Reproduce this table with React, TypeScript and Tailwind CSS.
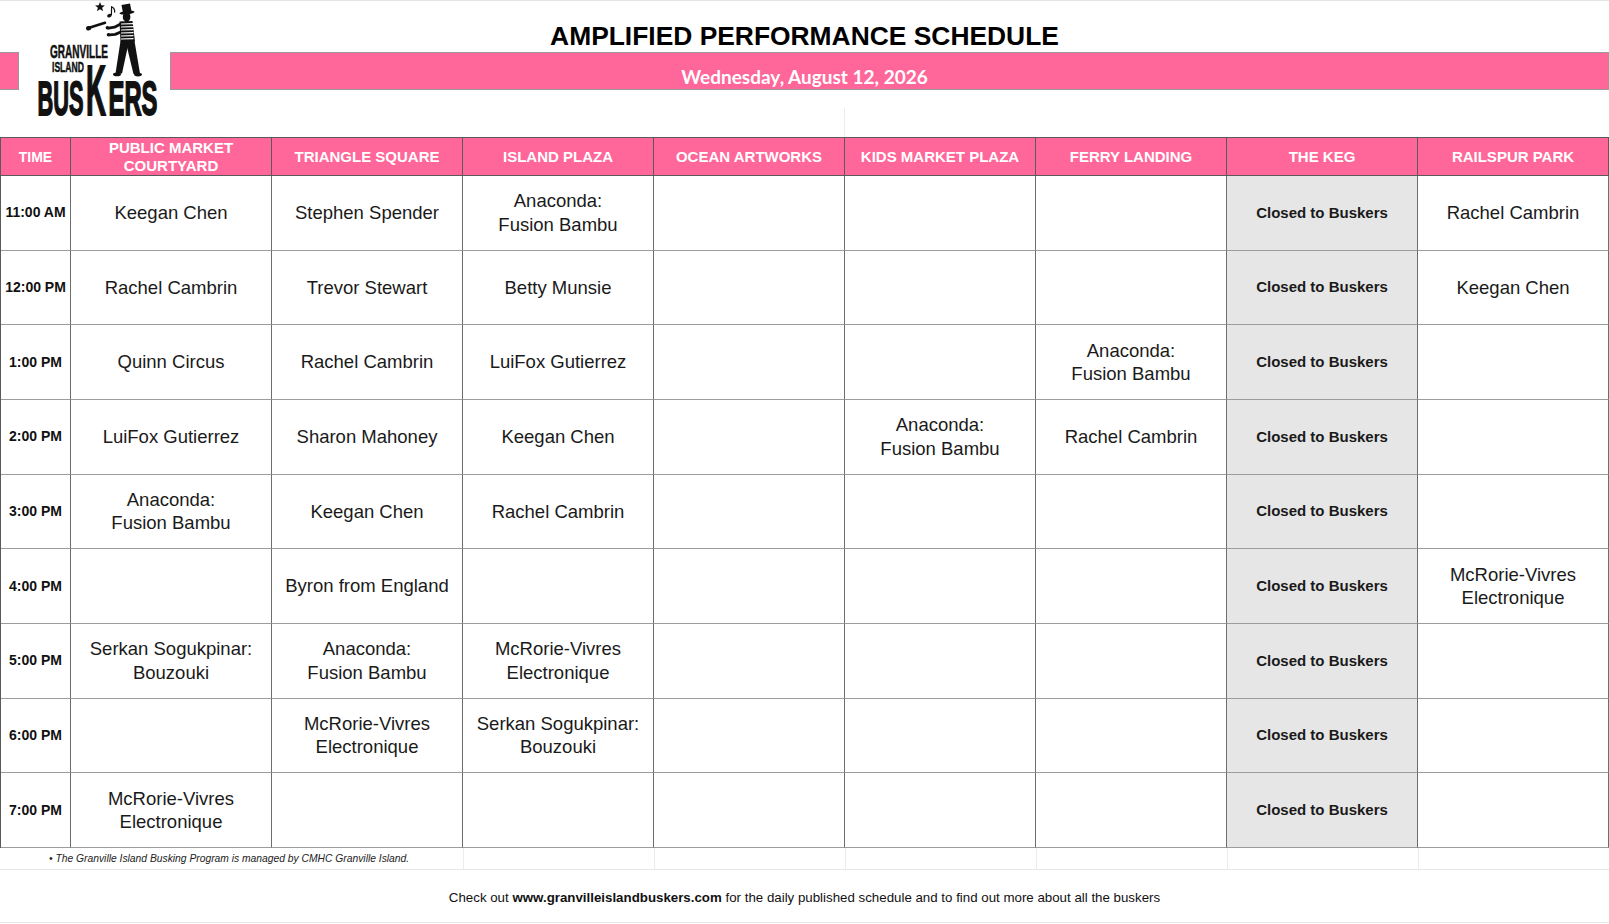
import React from "react";

type Cell = string | null;

const HEADERS: string[][] = [
  ["TIME"],
  ["PUBLIC MARKET", "COURTYARD"],
  ["TRIANGLE SQUARE"],
  ["ISLAND PLAZA"],
  ["OCEAN ARTWORKS"],
  ["KIDS MARKET PLAZA"],
  ["FERRY LANDING"],
  ["THE KEG"],
  ["RAILSPUR PARK"],
];

const AN = "Anaconda:|Fusion Bambu";
const MC = "McRorie-Vivres|Electronique";
const SK = "Serkan Sogukpinar:|Bouzouki";
const C = "CLOSED";

const ROWS: { time: string; cells: Cell[] }[] = [
  { time: "11:00 AM", cells: ["Keegan Chen", "Stephen Spender", AN, null, null, null, C, "Rachel Cambrin"] },
  { time: "12:00 PM", cells: ["Rachel Cambrin", "Trevor Stewart", "Betty Munsie", null, null, null, C, "Keegan Chen"] },
  { time: "1:00 PM", cells: ["Quinn Circus", "Rachel Cambrin", "LuiFox Gutierrez", null, null, AN, C, null] },
  { time: "2:00 PM", cells: ["LuiFox Gutierrez", "Sharon Mahoney", "Keegan Chen", null, AN, "Rachel Cambrin", C, null] },
  { time: "3:00 PM", cells: [AN, "Keegan Chen", "Rachel Cambrin", null, null, null, C, null] },
  { time: "4:00 PM", cells: [null, "Byron from England", null, null, null, null, C, MC] },
  { time: "5:00 PM", cells: [SK, AN, MC, null, null, null, C, null] },
  { time: "6:00 PM", cells: [null, MC, SK, null, null, null, C, null] },
  { time: "7:00 PM", cells: [MC, null, null, null, null, null, C, null] },
];

const LOGO_FONT = "'Liberation Sans', Arial, sans-serif";

function Logo() {
  const stripes = [24, 27, 30, 33, 36, 39];
  return (
    <svg className="absolute left-0 top-0" width="170" height="134" viewBox="0 0 170 134">
      {/* star */}
      <polygon
        fill="#111"
        points="100,2 101.3,5.3 104.9,5.5 102.1,7.7 103.1,11.2 100,9.2 96.9,11.2 97.9,7.7 95.1,5.5 98.7,5.3"
      />
      {/* music note */}
      <ellipse cx="109.4" cy="15.6" rx="2.3" ry="1.7" transform="rotate(-20 109.4 15.6)" fill="#111" />
      <path d="M111.4 15.2 L111.6 6.8 Q115.2 8.4 114.6 12.6" stroke="#111" strokeWidth="1.2" fill="none" />
      {/* club */}
      <path d="M90 27.6 L105 22.8" stroke="#111" strokeWidth="2.6" strokeLinecap="round" />
      <ellipse cx="88.6" cy="28.2" rx="2.6" ry="2.2" transform="rotate(-18 88.6 28.2)" fill="#111" />
      {/* hat */}
      <polygon points="121.5,5 130,3.6 131.6,11.8 123,12.8" fill="#111" />
      <ellipse cx="127" cy="12.6" rx="7.6" ry="1.8" transform="rotate(-7 127 12.6)" fill="#111" />
      {/* head */}
      <ellipse cx="126.6" cy="17" rx="3.8" ry="4.2" fill="#111" />
      <rect x="125" y="19.5" width="3.4" height="3" fill="#111" />
      {/* arms */}
      <path
        d="M122.5 23 L114.5 27.2 L108.6 28.2"
        stroke="#111"
        strokeWidth="2.8"
        fill="none"
        strokeLinecap="round"
        strokeLinejoin="round"
      />
      <path
        d="M122 31.5 L115.2 34.4 L109.6 34.8"
        stroke="#111"
        strokeWidth="2.8"
        fill="none"
        strokeLinecap="round"
        strokeLinejoin="round"
      />
      <circle cx="107.4" cy="27.8" r="1.8" fill="#111" />
      <circle cx="108.5" cy="34.8" r="1.8" fill="#111" />
      {/* torso */}
      <polygon points="119.5,21.5 132.5,21 135,41.5 120.5,42" fill="#111" />
      {stripes.map((y) => (
        <line key={y} x1="121" y1={y} x2="133.5" y2={y - 0.3} stroke="#fff" strokeWidth="1.2" />
      ))}
      {/* legs */}
      <polygon points="120.5,41 129,41 122,73.5 115.5,73.5" fill="#111" />
      <polygon points="125.5,41 134.5,41 140,73.5 133.5,74" fill="#111" />
      <ellipse cx="117" cy="74.4" rx="4" ry="1.8" fill="#111" />
      <ellipse cx="138" cy="74.6" rx="4" ry="1.8" fill="#111" />
      {/* words */}
      <text
        x="50"
        y="58"
        fontFamily={LOGO_FONT}
        fontWeight="bold"
        fontSize="18"
        textLength="58"
        lengthAdjust="spacingAndGlyphs"
        fill="#111"
        stroke="#111"
        strokeWidth="0.5"
      >
        GRANVILLE
      </text>
      <text
        x="52"
        y="71.5"
        fontFamily={LOGO_FONT}
        fontWeight="bold"
        fontSize="15"
        textLength="32"
        lengthAdjust="spacingAndGlyphs"
        fill="#111"
        stroke="#111"
        strokeWidth="0.5"
      >
        ISLAND
      </text>
      <text
        x="37.5"
        y="114.5"
        fontFamily={LOGO_FONT}
        fontWeight="bold"
        fontSize="48"
        textLength="46"
        lengthAdjust="spacingAndGlyphs"
        fill="#111"
        stroke="#111"
        strokeWidth="1.8"
      >
        BUS
      </text>
      <text
        x="86"
        y="114.5"
        fontFamily={LOGO_FONT}
        fontWeight="bold"
        fontSize="70"
        textLength="20"
        lengthAdjust="spacingAndGlyphs"
        fill="#111"
        stroke="#111"
        strokeWidth="1.8"
      >
        K
      </text>
      <text
        x="108.5"
        y="114.5"
        fontFamily={LOGO_FONT}
        fontWeight="bold"
        fontSize="48"
        textLength="49"
        lengthAdjust="spacingAndGlyphs"
        fill="#111"
        stroke="#111"
        strokeWidth="1.8"
      >
        ERS
      </text>
    </svg>
  );
}

const GRID = "grid grid-cols-[70px_201px_191px_191px_191px_191px_191px_191px_191px]";

function DataCell({ value }: { value: Cell }) {
  if (value === C) {
    return (
      <div className="flex items-center justify-center border-r border-b border-r-[#6e6e6e] border-b-[#9c9c9c] bg-[#e6e6e6] text-[15px] font-bold text-[#1a1a1a]">
        Closed to Buskers
      </div>
    );
  }
  const lines = value ? value.split("|") : [];
  return (
    <div className="flex flex-col items-center justify-center border-r border-b border-r-[#6e6e6e] border-b-[#9c9c9c] text-center text-[18.5px] leading-[23.5px] text-[#1a1a1a]">
      {lines.map((l) => (
        <span key={l}>{l}</span>
      ))}
    </div>
  );
}

export default function App() {
  return (
    <div className="w-[1609px] h-[924px] overflow-hidden bg-white font-['Liberation_Sans',Arial,sans-serif]">
      {/* header area */}
      <div className="relative">
        <div className="h-px bg-[#e4e4e4]" />
        <div className="h-[51px] pt-[22px] text-center text-[26.4px] font-bold leading-none text-black">
          AMPLIFIED PERFORMANCE SCHEDULE
        </div>
        <div className="flex h-[38px]">
          <div className="w-[19px] bg-[#ff6699] border-y border-r border-[#9a9a9a]" />
          <div className="w-[151px]" />
          <div className="flex-1 bg-[#ff6699] border border-[#9a9a9a] pr-[170px] pt-[14px] text-center font-['Lato',sans-serif] text-[19px] font-bold leading-none text-white">
            Wednesday, August 12, 2026
          </div>
        </div>
        <div className="h-[47px] pt-[18px]">
          <div className="ml-[844px] h-[29px] w-px bg-[#ececec]" />
        </div>
        <Logo />
      </div>

      {/* table */}
      <div className="border-t border-l border-[#5a5a5a]">
        <div className={`${GRID} h-[38px]`}>
          {HEADERS.map((h, i) => (
            <div
              key={i}
              className={`flex flex-col items-center justify-center border-r border-b border-[#5a5a5a] bg-[#ff6699] text-center font-bold leading-[18px] text-white ${
                i === 0 ? "text-[14px]" : "text-[15px]"
              }`}
            >
              {h.map((l) => (
                <span key={l}>{l}</span>
              ))}
            </div>
          ))}
        </div>
        {ROWS.map((r) => (
          <div key={r.time} className={`${GRID} h-[74.67px]`}>
            <div className="flex items-center justify-center border-r border-b border-r-[#6e6e6e] border-b-[#9c9c9c] text-[14px] font-bold text-[#111]">
              {r.time}
            </div>
            {r.cells.map((c, i) => (
              <DataCell key={i} value={c} />
            ))}
          </div>
        ))}
      </div>

      {/* footnote row */}
      <div className={`${GRID} h-[22px] border-b border-[#e6e6e6] pl-px`}>
        <div className="col-span-3 pl-[48px] text-[10.3px] italic leading-[22px] text-[#222]">
          • The Granville Island Busking Program is managed by CMHC Granville Island.
        </div>
        <div className="border-l border-[#ececec]" />
        <div className="border-l border-[#ececec]" />
        <div className="border-l border-[#ececec]" />
        <div className="border-l border-[#ececec]" />
        <div className="border-l border-[#ececec]" />
        <div className="border-l border-[#ececec]" />
      </div>

      {/* bottom note */}
      <div className="h-[53px] border-b border-[#e6e6e6] pt-[21px] text-center text-[13.3px] leading-none text-[#111]">
        Check out <span className="font-bold">www.granvilleislandbuskers.com</span> for the daily published schedule and to
        find out more about all the buskers
      </div>
    </div>
  );
}
